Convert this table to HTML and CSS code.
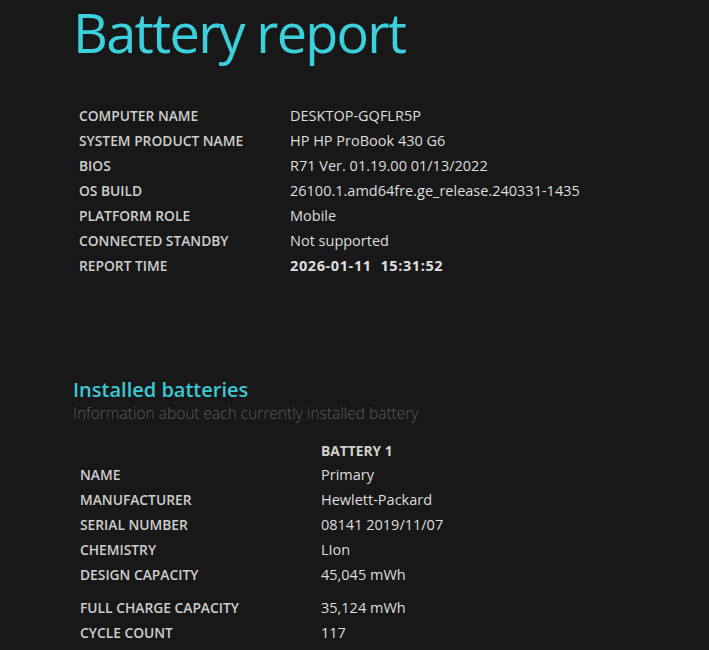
FILE: index.html
```html
<!DOCTYPE html>
<html>
<head>
<meta charset="utf-8">
<link rel="stylesheet" href="styles.css">
</head>
<body>
<div class="page">
  <h1 class="title">Battery report</h1>
  <table class="info">
    <tr><td class="label">COMPUTER NAME</td><td class="value">DESKTOP-GQFLR5P</td></tr>
    <tr><td class="label">SYSTEM PRODUCT NAME</td><td class="value">HP HP ProBook 430 G6</td></tr>
    <tr><td class="label">BIOS</td><td class="value">R71 Ver. 01.19.00 01/13/2022</td></tr>
    <tr><td class="label">OS BUILD</td><td class="value">26100.1.amd64fre.ge_release.240331-1435</td></tr>
    <tr><td class="label">PLATFORM ROLE</td><td class="value">Mobile</td></tr>
    <tr><td class="label">CONNECTED STANDBY</td><td class="value">Not supported</td></tr>
    <tr><td class="label">REPORT TIME</td><td class="value strong">2026-01-11&nbsp; 15:31:52</td></tr>
  </table>

  <h2 class="section">Installed batteries</h2>
  <div class="subtitle">Information about each currently installed battery</div>

  <table class="batt">
    <tr class="headrow"><td class="label"></td><td class="head">BATTERY 1</td></tr>
    <tr><td class="label">NAME</td><td class="value">Primary</td></tr>
    <tr><td class="label">MANUFACTURER</td><td class="value">Hewlett-Packard</td></tr>
    <tr><td class="label">SERIAL NUMBER</td><td class="value">08141 2019/11/07</td></tr>
    <tr><td class="label">CHEMISTRY</td><td class="value">LIon</td></tr>
    <tr><td class="label">DESIGN CAPACITY</td><td class="value">45,045 mWh</td></tr>
    <tr class="spacer"><td></td><td></td></tr>
    <tr><td class="label">FULL CHARGE CAPACITY</td><td class="value">35,124 mWh</td></tr>
    <tr><td class="label">CYCLE COUNT</td><td class="value">117</td></tr>
  </table>
</div>
</body>
</html>
```
FILE: styles.css
```css
html, body {
  margin: 0;
  padding: 0;
  background: #181818;
}
body {
  font-family: "Open Sans", "Noto Sans", sans-serif;
  color: #d8d8d8;
}
.page {
  padding-left: 73px;
}
.title {
  margin: 0;
  padding-top: 0;
  font-weight: 400;
  font-size: 54px;
  line-height: 65px;
  color: #3ccfdc;
  letter-spacing: -1.7px;
}
.info {
  border-collapse: collapse;
  margin-top: 38px;
  margin-left: 6px;
}
.info td, .batt td {
  padding: 0;
  height: 25px;
  white-space: nowrap;
}
.label {
  font-size: 13.8px;
  font-weight: 600;
  color: #cfcfcf;
}
.info .label { width: 211px; }
.value {
  font-size: 14.5px;
  color: #dedede;
}
.strong {
  font-weight: 700;
  letter-spacing: 0.6px;
}
.section {
  margin: 99px 0 0 0;
  font-size: 20px;
  line-height: 26px;
  font-weight: 600;
  color: #3cc8d4;
}
.subtitle {
  font-size: 15.5px;
  font-weight: 300;
  color: #5a5a5a;
  line-height: 20px;
}
.batt {
  border-collapse: collapse;
  margin-top: 15px;
  margin-left: 7px;
}
.batt .label { width: 241px; }
.batt .headrow td { height: 24px; }
.head {
  font-size: 13.8px;
  font-weight: 700;
  color: #d0d0d0;
}
.batt .spacer td { height: 8px; }
```
